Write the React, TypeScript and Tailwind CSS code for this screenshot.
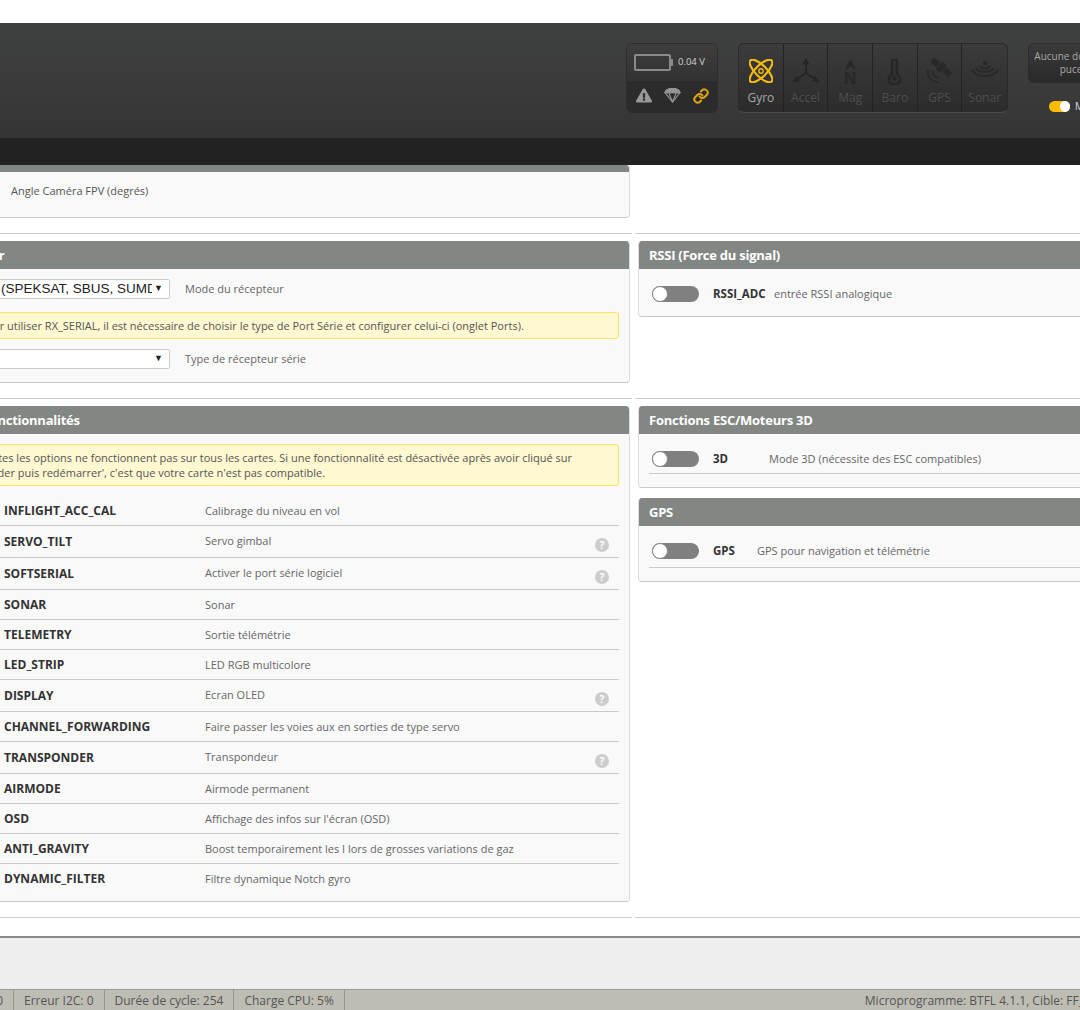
import React from 'react';
import { Link } from 'lucide-react';
import { FaExclamationTriangle } from 'react-icons/fa';

const features: { name: string; desc: string; help?: boolean }[] = [
  { name: 'INFLIGHT_ACC_CAL', desc: 'Calibrage du niveau en vol' },
  { name: 'SERVO_TILT', desc: 'Servo gimbal', help: true },
  { name: 'SOFTSERIAL', desc: 'Activer le port série logiciel', help: true },
  { name: 'SONAR', desc: 'Sonar' },
  { name: 'TELEMETRY', desc: 'Sortie télémétrie' },
  { name: 'LED_STRIP', desc: 'LED RGB multicolore' },
  { name: 'DISPLAY', desc: 'Ecran OLED', help: true },
  { name: 'CHANNEL_FORWARDING', desc: 'Faire passer les voies aux en sorties de type servo' },
  { name: 'TRANSPONDER', desc: 'Transpondeur', help: true },
  { name: 'AIRMODE', desc: 'Airmode permanent' },
  { name: 'OSD', desc: "Affichage des infos sur l'écran (OSD)" },
  { name: 'ANTI_GRAVITY', desc: 'Boost temporairement les I lors de grosses variations de gaz' },
  { name: 'DYNAMIC_FILTER', desc: 'Filtre dynamique Notch gyro' },
];

function GyroIcon() {
  return (
    <svg viewBox="0 0 24 24" className="w-[24px] h-[24px]" fill="none" stroke="#f5b914" strokeWidth="2.1">
      <ellipse cx="12" cy="12" rx="15" ry="5.6" transform="rotate(45 12 12)" />
      <ellipse cx="12" cy="12" rx="15" ry="5.6" transform="rotate(-45 12 12)" />
      <circle cx="12" cy="12" r="2.2" strokeWidth="1.4" />
    </svg>
  );
}

function AccelIcon() {
  return (
    <svg viewBox="0 0 28 26" className="w-[28px] h-[26px]" fill="#252525" stroke="#252525">
      <path d="M14 15V5M14 15L5 21M14 15L23 21" strokeWidth="1.8" fill="none" />
      <path d="M14 0L10.5 6.5H17.5Z M0 24L8 23.5L5 18Z M28 24L20 23.5L23 18Z" stroke="none" />
    </svg>
  );
}

function MagIcon() {
  return (
    <div className="flex flex-col items-center mt-[3px]">
      <svg viewBox="0 0 14 13" className="w-[13px] h-[12px]" fill="#272727">
        <path d="M7 0L13 12L7 8L1 12Z" />
      </svg>
      <span className="text-[17px] leading-[16px] font-bold text-[#272727] font-['Liberation_Sans',sans-serif]">N</span>
    </div>
  );
}

function BaroIcon() {
  return (
    <svg viewBox="0 0 16 28" className="w-[15px] h-[27px]" fill="#272727">
      <path
        fillRule="evenodd"
        d="M4 4a4 4 0 0 1 8 0v11.8a7.6 7.6 0 1 1-8 0Z M7 3.5v14.2a4.5 4.5 0 1 0 2 0V3.5a1 1 0 0 0-2 0Z"
      />
      <circle cx="8" cy="21.5" r="2.6" />
    </svg>
  );
}

function GpsIcon() {
  return (
    <svg viewBox="0 0 28 26" className="w-[28px] h-[26px]" fill="#292929">
      <g transform="rotate(40 16 10)">
        <rect x="3" y="7" width="8" height="6" />
        <rect x="12" y="5" width="6" height="10" />
        <rect x="19" y="7" width="8" height="6" />
      </g>
      <path d="M2 12a10 10 0 0 0 11 12" fill="none" stroke="#292929" strokeWidth="2" />
      <path d="M6.5 12.5a6 6 0 0 0 6.5 7" fill="none" stroke="#292929" strokeWidth="2" />
    </svg>
  );
}

function SonarIcon() {
  return (
    <svg viewBox="0 0 28 24" className="w-[28px] h-[24px]" fill="none" stroke="#292929" strokeWidth="2.2">
      <circle cx="14" cy="4" r="2.2" fill="#292929" stroke="none" />
      <path d="M9 7c2 3 8 3 10 0" />
      <path d="M5 9c3 5 15 5 18 0" />
      <path d="M1 11c5 8 21 8 26 0" />
    </svg>
  );
}

function ParachuteIcon() {
  return (
    <svg viewBox="0 0 18 16" className="w-[17px] h-[15px]" fill="none" stroke="#949494" strokeWidth="1.2">
      <path d="M1 5C2 1 6 .5 9 .5S16 1 17 5L9 15Z" />
      <path d="M1 5h16M5 5l4 10M13 5l-4 10" />
      <path d="M1 5C2 1 6 .5 9 .5S16 1 17 5Z" fill="#949494" />
    </svg>
  );
}

function Toggle() {
  return (
    <div className="w-[47px] h-[16px] rounded-full bg-[#808080] shrink-0">
      <div className="w-[16px] h-[16px] rounded-full bg-white border border-[#888]" />
    </div>
  );
}

function HelpIcon() {
  return (
    <span className="mt-[7px] mr-[10px] w-[14px] h-[14px] rounded-full bg-[#cccccc] text-white text-[10px] leading-[14px] font-bold text-center">
      ?
    </span>
  );
}

function SensorCell({ label, active, icon }: { label: string; active?: boolean; icon: React.ReactNode }) {
  return (
    <div className="w-[45px] flex flex-col items-center border-r border-[#232323] last:border-r-0">
      <div className="h-[38px] mt-[8px] flex items-center justify-center">{icon}</div>
      <span
        className={`text-[12px] leading-[16px] ${
          active ? 'text-[#a8a8a8]' : 'text-[#505050] [text-shadow:0_1px_0_#2a2a2a]'
        }`}
      >
        {label}
      </span>
    </div>
  );
}

function Card({ title, children }: { title?: string; children: React.ReactNode }) {
  return (
    <div className="bg-[#f9f9f9] border border-t-0 border-[#dcdcdc] border-b-[#c9c9c9] rounded-[4px] overflow-hidden">
      {title ? (
        <div className="h-[28px] bg-[#828784] px-[10px] text-white text-[13px] leading-[28px] font-bold tracking-[-0.25px]">{title}</div>
      ) : (
        <div className="h-[7px] bg-[#828784]" />
      )}
      {children}
    </div>
  );
}

function FakeSelect({ text }: { text?: string }) {
  return (
    <div className="w-[229px] h-[20px] bg-white border border-[#ccc] rounded-[2px] flex items-center justify-between pr-[6px] overflow-hidden font-['Liberation_Sans',sans-serif] text-[#222]">
      <span className="ml-[59px] w-[151px] shrink-0 text-[13.5px] leading-[18px] whitespace-nowrap overflow-hidden">{text}</span>
      <span className="text-[9px] shrink-0">▼</span>
    </div>
  );
}

export default function App() {
  return (
    <div className="w-[1080px] h-[1010px] overflow-hidden bg-white flex flex-col font-['Open_Sans',sans-serif]">
      <div className="h-[23px] shrink-0 bg-white" />

      {/* Top bar */}
      <div className="h-[115px] shrink-0 bg-gradient-to-b from-[#3f4140] to-[#353535] flex items-start pl-[626px] pt-[20px]">
        <div className="w-[92px] h-[70px] rounded-[6px] border border-[#2c2c2c] overflow-hidden shrink-0 flex flex-col">
          <div className="h-[37px] bg-gradient-to-b from-[#3d3d3d] to-[#333] flex items-center pl-[7px]">
            <div className="w-[37px] h-[17px] border-2 border-[#8a8a8a] rounded-[2px]" />
            <div className="w-[2px] h-[7px] bg-[#8a8a8a]" />
            <span className="ml-[5px] text-[9.5px] text-[#d0d0d0]">0.04 V</span>
          </div>
          <div className="flex-1 bg-[#2b2b2b] flex items-center pb-[2px]">
            <FaExclamationTriangle className="ml-[9px] w-[16px] h-[15px] text-[#999]" />
            <div className="ml-[12px]">
              <ParachuteIcon />
            </div>
            <Link className="ml-[12px] w-[16px] h-[16px] text-[#dfa510]" strokeWidth={3} />
          </div>
        </div>

        <div className="ml-[20px] w-[270px] h-[70px] rounded-[6px] border border-[#2a2a2a] border-b-[#4a4a4a] bg-gradient-to-b from-[#3b3b3b] to-[#2c2c2c] flex shrink-0 overflow-hidden">
          <SensorCell label="Gyro" active icon={<GyroIcon />} />
          <SensorCell label="Accel" icon={<AccelIcon />} />
          <SensorCell label="Mag" icon={<MagIcon />} />
          <SensorCell label="Baro" icon={<BaroIcon />} />
          <SensorCell label="GPS" icon={<GpsIcon />} />
          <SensorCell label="Sonar" icon={<SonarIcon />} />
        </div>

        <div className="ml-[20px] w-[86px] shrink-0">
          <div className="h-[40px] rounded-[6px] border border-[#2c2c2c] bg-gradient-to-b from-[#3a3a3a] to-[#2a2a2a] text-center text-[10px] leading-[13px] text-[#a8a8a8] pt-[6px] whitespace-nowrap">
            Aucune donnée
            <br />
            puce
          </div>
          <div className="mt-[18px] ml-[21px] flex items-center">
            <div className="w-[21px] h-[11px] rounded-full bg-[#ffbb00] flex justify-end shrink-0">
              <div className="w-[10px] h-[11px] rounded-full bg-white" />
            </div>
            <span className="ml-[5px] text-[10px] leading-[11px] text-[#d8d8d8] whitespace-nowrap">Mode Expert</span>
          </div>
        </div>
      </div>
      <div className="h-[27px] shrink-0 bg-[#222222]" />

      {/* Content */}
      <div className="flex-1 overflow-hidden text-[11px] text-[#666]">
        {/* Camera row */}
        <div className="flex h-[69px]">
          <div className="w-[703px] -ml-[71px] shrink-0 border-b border-[#ccc] pr-[2px]">
            <Card>
              <div className="h-[45px] pl-[81px] pt-[11px] leading-[16px] text-[#555]">Angle Caméra FPV (degrés)</div>
            </Card>
          </div>
          <div className="flex-1 ml-[3px] border-b border-[#ccc]" />
        </div>

        {/* Receiver row */}
        <div className="flex h-[165px]">
          <div className="w-[703px] -ml-[71px] shrink-0 border-b border-[#ccc] pt-[7px] pr-[2px]">
            <Card title="Récepteur">
              <div className="h-[113px] pl-[11px] pr-[10px] pt-[10px]">
                <div className="flex items-center">
                  <FakeSelect text="(SPEKSAT, SBUS, SUMD, IBUS)" />
                  <span className="ml-[15px]">Mode du récepteur</span>
                </div>
                <div className="mt-[13px] h-[27px] bg-[#fff8d0] border border-[#ffe45e] rounded-[3px] pl-[7px] leading-[25px] text-[#555] whitespace-nowrap">
                  Note: Pour utiliser RX_SERIAL, il est nécessaire de choisir le type de Port Série et configurer celui-ci (onglet Ports).
                </div>
                <div className="mt-[10px] flex items-center">
                  <FakeSelect />
                  <span className="ml-[15px]">Type de récepteur série</span>
                </div>
              </div>
            </Card>
          </div>
          <div className="flex-1 ml-[3px] border-b border-[#ccc] pt-[7px]">
            <div className="ml-[3px] w-[500px]">
              <Card title="RSSI (Force du signal)">
                <div className="h-[47px] pl-[13px] pt-[3px] flex items-center">
                  <Toggle />
                  <span className="ml-[14px] font-bold text-[#333] text-[11.5px] w-[61px]">RSSI_ADC</span>
                  <span>entrée RSSI analogique</span>
                </div>
              </Card>
            </div>
          </div>
        </div>

        {/* Features row */}
        <div className="flex h-[519px]">
          <div className="w-[703px] -ml-[71px] shrink-0 border-b border-[#ccc] pt-[7px] pr-[2px]">
            <Card title="Autres fonctionnalités">
              <div className="h-[467px] pl-[11px] pr-[10px] pt-[10px]">
                <div className="h-[42px] bg-[#fff8d0] border border-[#ffe45e] rounded-[3px] pl-[6px] pt-[5px] leading-[15px] text-[#555] whitespace-nowrap">
                  Note: Toutes les options ne fonctionnent pas sur tous les cartes. Si une fonctionnalité est désactivée après avoir cliqué sur
                  <br />
                  'Sauvegarder puis redémarrer', c'est que votre carte n'est pas compatible.
                </div>
                <div className="mt-[10px]">
                  {features.map((f, i) => (
                    <div
                      key={f.name}
                      className={`flex items-center ${f.help ? 'h-[32px]' : 'h-[30px]'} ${
                        i < features.length - 1 ? 'border-b border-[#c9c9c9]' : ''
                      }`}
                    >
                      <span className="ml-[63px] w-[201px] font-bold text-[#333] text-[12px] whitespace-nowrap">{f.name}</span>
                      <span className={`flex-1 ${f.help ? '' : 'pt-[1px]'}`}>{f.desc}</span>
                      {f.help && <HelpIcon />}
                    </div>
                  ))}
                </div>
              </div>
            </Card>
          </div>
          <div className="flex-1 ml-[3px] border-b border-[#ccc] pt-[7px]">
            <div className="ml-[3px] w-[500px] flex flex-col gap-[10px]">
              <Card title="Fonctions ESC/Moteurs 3D">
                <div className="h-[53px] pl-[10px] pt-[11px]">
                  <div className="h-[29px] flex items-center pl-[3px] border-b border-[#c9c9c9]">
                    <Toggle />
                    <span className="ml-[14px] font-bold text-[#333] text-[11.5px] w-[56px]">3D</span>
                    <span>Mode 3D (nécessite des ESC compatibles)</span>
                  </div>
                </div>
              </Card>
              <Card title="GPS">
                <div className="h-[55px] pl-[10px] pt-[9px]">
                  <div className="h-[33px] flex items-center pl-[3px] border-b border-[#c9c9c9]">
                    <Toggle />
                    <span className="ml-[14px] font-bold text-[#333] text-[11.5px] w-[44px]">GPS</span>
                    <span>GPS pour navigation et télémétrie</span>
                  </div>
                </div>
              </Card>
            </div>
          </div>
        </div>
      </div>

      {/* Log area */}
      <div className="h-[53px] shrink-0 bg-[#eeeeee] border-t-[2px] border-[#8a8a8a]" />

      {/* Status bar */}
      <div className="h-[21px] shrink-0 bg-[#bebdb3] border-t border-[#9a9a90] flex items-center text-[12px] text-[#555] whitespace-nowrap">
        <div className="w-[14px] shrink-0 h-full border-r border-[#98978c] flex justify-end pr-[10px] leading-[21px]">
          <span>0</span>
        </div>
        <div className="shrink-0 h-full border-r border-[#98978c] px-[10px] leading-[21px]">Erreur I2C: 0</div>
        <div className="shrink-0 h-full border-r border-[#98978c] px-[10px] leading-[21px]">Durée de cycle: 254</div>
        <div className="shrink-0 h-full border-r border-[#98978c] px-[10px] leading-[21px]">Charge CPU: 5%</div>
        <div className="shrink-0 ml-[520px] leading-[21px]">Microprogramme: BTFL 4.1.1, Cible: FF_FORTINIF4</div>
      </div>
    </div>
  );
}
